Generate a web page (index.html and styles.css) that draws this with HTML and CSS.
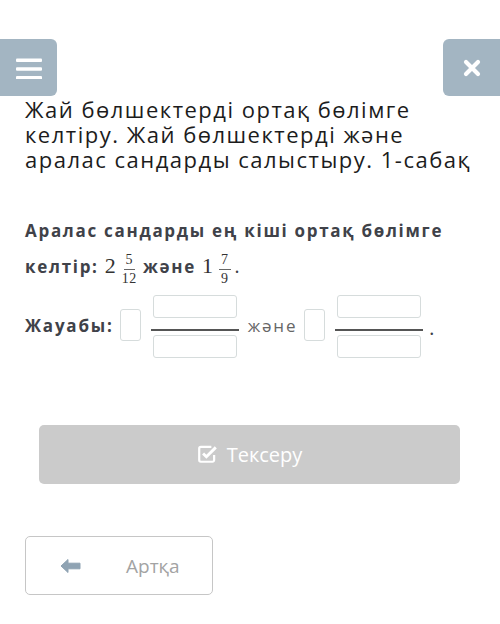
FILE: index.html
```html
<!DOCTYPE html>
<html lang="kk">
<head>
<meta charset="utf-8">
<link rel="stylesheet" href="styles.css">
</head>
<body>
<header class="topbar">
  <button class="icon-btn menu-btn" aria-label="menu">
    <svg width="26" height="22" viewBox="0 0 26 22"><rect x="0" y="1.5" width="26" height="3.6" rx="1" fill="#fff"/><rect x="0" y="10.2" width="26" height="3.6" rx="1" fill="#fff"/><rect x="0" y="19" width="26" height="3.6" rx="1" fill="#fff"/></svg>
  </button>
  <button class="icon-btn close-btn" aria-label="close">
    <svg width="18" height="18" viewBox="0 0 18 18"><path d="M3 3 L15 15 M15 3 L3 15" stroke="#fff" stroke-width="4.2" stroke-linecap="round"/></svg>
  </button>
</header>

<h1 class="title">Жай бөлшектерді ортақ бөлімге келтіру. Жай бөлшектерді және аралас сандарды салыстыру. 1-сабақ</h1>

<div class="question">
  <div class="q-line">Аралас сандарды ең кіші ортақ бөлімге</div>
  <div class="q-line"><span>келтір:</span> <span class="mixed"><span class="whole">2</span><span class="frac"><span class="num">5</span><span class="den">12</span></span></span> <span>және</span> <span class="mixed"><span class="whole">1</span><span class="frac"><span class="num">7</span><span class="den">9</span></span></span><span class="dot">.</span></div>
</div>

<div class="answer">
  <span class="label">Жауабы:</span>
  <span class="box whole-box"></span>
  <span class="in-frac"><span class="box part-box"></span><span class="bar"></span><span class="box part-box den-box"></span></span>
  <span class="and">және</span>
  <span class="box whole-box"></span>
  <span class="in-frac"><span class="box part-box"></span><span class="bar"></span><span class="box part-box den-box"></span></span>
  <span class="end-dot">.</span>
</div>

<div class="check-wrap">
  <button class="check-btn">
    <svg width="19" height="18" viewBox="0 0 19 18"><path d="M13 2.5 H3.5 a1.5 1.5 0 0 0 -1.5 1.5 v10.5 a1.5 1.5 0 0 0 1.5 1.5 h10.5 a1.5 1.5 0 0 0 1.5 -1.5 v-4.5" fill="none" stroke="#fff" stroke-width="2"/><path d="M5.5 8.5 L8.5 11.5 L17 3" fill="none" stroke="#fff" stroke-width="2.6"/></svg>
    <span>Тексеру</span>
  </button>
</div>

<div class="back-wrap">
  <button class="back-btn">
    <svg width="21" height="16" viewBox="0 0 21 16"><path d="M1 8 L8 1.5 L8 5.2 L20 5.2 L20 10.8 L8 10.8 L8 14.5 Z" fill="#8fa3b3" stroke="#8fa3b3" stroke-width="1" stroke-linejoin="round"/></svg>
    <span>Артқа</span>
  </button>
</div>
</body>
</html>
```

FILE: styles.css
```css
* { box-sizing: border-box; }
html, body { margin: 0; padding: 0; background: #fff; }
body {
  width: 500px;
  font-family: "Open Sans", "Noto Sans", sans-serif;
  color: #1e1e1e;
}
button { font-family: inherit; border: none; padding: 0; cursor: pointer; }

.topbar {
  display: flex;
  justify-content: space-between;
  padding-top: 39px;
}
.icon-btn {
  width: 57px;
  height: 57px;
  background: #a3b5c2;
  display: flex;
  align-items: center;
  justify-content: center;
}
.menu-btn { border-radius: 0 6px 6px 0; }
.close-btn { border-radius: 6px 0 0 6px; }

.title {
  margin: 1px 0 0 25px;
  width: 455px;
  font-size: 22px;
  line-height: 25px;
  letter-spacing: 1.5px;
  font-weight: 400;
  color: #1c1c1c;
}

.question {
  margin: 43px 0 0 25px;
  width: 440px;
  font-size: 17px;
  line-height: 31px;
  letter-spacing: 1.7px;
  font-weight: 700;
  color: #404249;
}
.q-line { height: 31px; white-space: nowrap; }
.mixed {
  display: inline-flex;
  align-items: center;
  font-family: "Liberation Serif", "DejaVu Serif", serif;
  font-weight: 400;
  letter-spacing: 0;
  line-height: 22px;
  color: #333;
}
.whole { font-size: 22px; margin-right: 6px; }
.frac {
  display: inline-flex;
  flex-direction: column;
  align-items: center;
  font-size: 14px;
  letter-spacing: 0.5px;
  margin-top: 6px;
}
.frac .num { line-height: 15.5px; padding: 0 2px 1px; border-bottom: 1px solid #666; }
.frac .den { line-height: 15.5px; padding-top: 1px; }
.dot { font-family: "Liberation Serif", serif; font-weight: 400; margin-left: 4px; font-size: 20px; }

.answer {
  display: flex;
  align-items: center;
  margin: 15px 0 0 25px;
  font-size: 17px;
  letter-spacing: 1.8px;
  color: #404249;
}
.label { font-weight: 700; }
.box {
  display: block;
  border: 1.5px solid #d6dcdc;
  border-radius: 3px;
  background: #fff;
}
.whole-box { width: 21px; height: 32px; margin-left: 6px; }
.in-frac {
  display: flex;
  flex-direction: column;
  align-items: center;
  width: 88px;
  margin-left: 10px;
  margin-top: 3px;
}
.part-box { width: 84px; height: 23px; }
.bar { display: block; width: 88px; height: 2px; background: #555; margin: 11px 0 4px; }
.and { margin-left: 9px; color: #666; font-weight: 400; }
.and + .whole-box { margin-left: 7px; }
.end-dot { margin-left: 6px; font-family: "Liberation Serif", serif; margin-top: 6px; font-size: 20px; }

.check-wrap { margin-top: 67px; padding: 0 40px 0 39px; }
.check-btn {
  width: 421px;
  height: 59px;
  background: #cbcbcb;
  border-radius: 5px;
  color: #fff;
  font-size: 20px;
  display: flex;
  align-items: center;
  justify-content: center;
  gap: 9px;
}
.check-btn svg { width: 21px; height: 20px; margin-top: -2px; }

.back-wrap { margin-top: 52px; padding-left: 25px; }
.back-btn {
  width: 188px;
  height: 59px;
  background: #fff;
  border: 1.5px solid #c6c6c6;
  border-radius: 5px;
  display: flex;
  align-items: center;
  padding-left: 34px;
  font-size: 19px;
  color: #a3a3a3;
}
.back-btn span { margin-left: 45px; }
```
